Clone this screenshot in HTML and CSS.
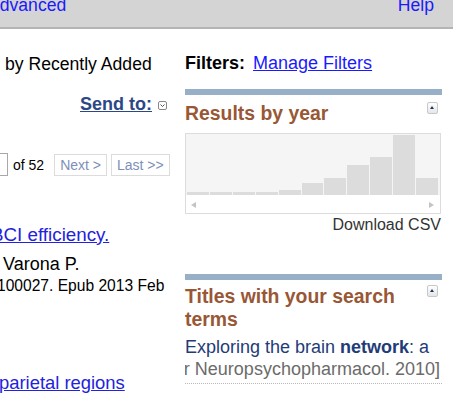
FILE: index.html
```html
<!DOCTYPE html>
<html lang="en">
<head>
  <meta charset="UTF-8">
  <title>PubMed results</title>
  <link rel="stylesheet" href="styles.css">
</head>
<body>

  <div class="topbar">
    <a href="#" class="adv">Advanced</a>
    <a href="#" class="help">Help</a>
  </div>

  <div class="content">
    <!-- left: result list, cut by the window -->
    <div class="results">
      <div class="sortby">by Recently Added</div>
      <div class="sendto">
        <a href="#">Send to:</a>
        <span class="dropicon">
          <svg width="9" height="9" viewBox="0 0 9 9"><rect x="0.5" y="0.5" width="8" height="8" rx="1.5" fill="#fff" stroke="#888"/><path d="M2.5 3.5 L4.5 5.5 L6.5 3.5" fill="none" stroke="#555"/></svg>
        </span>
      </div>
      <div class="pager">
        <input class="pagebox" type="text" value="1">
        <span class="ofpages">of 52</span>
        <a href="#" class="pagebtn">Next &gt;</a>
        <a href="#" class="pagebtn">Last &gt;&gt;</a>
      </div>
      <a href="#" class="title-link first">BCI efficiency.</a>
      <div class="authors">Varona P.</div>
      <div class="cite">100027. Epub 2013 Feb</div>
      <a href="#" class="title-link second">parietal regions</a>
    </div>

    <!-- right: side portlets -->
    <div class="sidebar">
      <div class="filters"><b>Filters:</b> <a href="#">Manage Filters</a></div>

      <div class="portlet">
        <div class="portlet-head">
          <h3>Results by year</h3>
          <span class="toggle"></span>
        </div>
        <div class="chart">
          <div class="plot">
            <div class="bar" style="height: 3px"></div>
            <div class="bar" style="height: 3px"></div>
            <div class="bar" style="height: 3px"></div>
            <div class="bar" style="height: 3px"></div>
            <div class="bar" style="height: 5px"></div>
            <div class="bar" style="height: 12px"></div>
            <div class="bar" style="height: 17px"></div>
            <div class="bar" style="height: 30px"></div>
            <div class="bar" style="height: 38px"></div>
            <div class="bar" style="height: 60px"></div>
            <div class="bar" style="height: 17px"></div>
          </div>
          <div class="scroller">
            <span class="arrow left"></span>
            <span class="arrow right"></span>
          </div>
        </div>
        <div class="csv"><a href="#">Download CSV</a></div>
      </div>

      <div class="portlet titles">
        <div class="portlet-head">
          <h3>Titles with your search terms</h3>
          <span class="toggle"></span>
        </div>
        <div class="item">
          <a href="#" class="item-title">Exploring the brain <b>network</b>: a</a>
          <div class="item-src"><span>[Eur Neuropsychopharmacol. 2010]</span></div>
        </div>
      </div>
    </div>
  </div>

</body>
</html>
```

FILE: styles.css
```css
body {
  margin: 0;
  font-family: "Liberation Sans", Arial, sans-serif;
  font-size: 17.6px;
  line-height: 20px;
  color: #000;
  background: #fff;
  overflow: hidden;
}

a {
  color: #1a1aff;
}

.topbar {
  display: flex;
  justify-content: space-between;
  height: 27px;
  background-color: #d4d4d4;
  border-bottom: 2px solid #b4b4b4;
  padding-right: 19px;
}

.topbar a {
  text-decoration: none;
  margin-top: -5px;
}

.adv {
  margin-left: -12px;
}

.content {
  display: flex;
}

/* left column */
.results {
  width: 180px;
  overflow: hidden;
  flex-shrink: 0;
}

.sortby {
  margin-top: 25px;
  padding-left: 5px;
}

.sendto {
  display: flex;
  justify-content: flex-end;
  align-items: center;
  gap: 6px;
  margin-top: 20px;
  padding-right: 13px;
  height: 20px;
}

.sendto a {
  color: #2c4785;
  font-weight: bold;
  font-size: 18px;
}

.dropicon svg {
  display: block;
  margin-top: 2px;
}

.pager {
  display: flex;
  align-items: center;
  gap: 4px;
  margin-top: 39px;
  height: 23px;
  font-size: 14px;
}

.pagebox {
  width: 30px;
  height: 23px;
  box-sizing: border-box;
  margin: 0 0 0 -22px;
  border: 1px solid #a8a8a8;
  font: inherit;
  padding: 0;
}

.ofpages {
  margin: 0 6px 0 1px;
}

.pagebtn {
  display: block;
  height: 22px;
  line-height: 20px;
  box-sizing: border-box;
  border: 1px solid #dcdcdc;
  padding: 0 5px;
  color: #7d8fb8;
  text-decoration: none;
}

.title-link {
  display: block;
  white-space: nowrap;
  font-size: 18.4px;
  color: #2222dd;
}

.title-link.first {
  margin-top: 49px;
  margin-left: -9px;
  font-size: 18.8px;
}

.authors {
  margin-top: 9px;
  padding-left: 3px;
  font-size: 18px;
}

.cite {
  margin-top: 2px;
  margin-left: -3px;
  font-size: 15.6px;
  white-space: nowrap;
}

.title-link.second {
  margin-top: 77px;
  margin-left: -1px;
}

/* right column */
.sidebar {
  width: 257px;
  margin-left: 5px;
}

.filters {
  margin-top: 24px;
  font-size: 18px;
}

.filters a {
  margin-left: 3px;
}

.portlet {
  margin-top: 16px;
  border-top: 6px solid #97b0c8;
}

.portlet-head {
  display: flex;
  justify-content: space-between;
  align-items: flex-start;
  padding-top: 7px;
}

.portlet-head h3 {
  margin: 0;
  color: #985735;
  font-size: 19.4px;
  line-height: 23px;
}

.toggle {
  position: relative;
  flex-shrink: 0;
  width: 9px;
  height: 10px;
  margin: 0 4px 0 0;
  border: 1px solid #c8c8c8;
  border-radius: 2px;
  background: linear-gradient(#fff, #e6e6e6);
}

.toggle::after {
  content: "";
  position: absolute;
  left: 2px;
  top: 3px;
  border-left: 2.5px solid transparent;
  border-right: 2.5px solid transparent;
  border-bottom: 3px solid #1d3466;
}

.chart {
  margin-top: 8px;
  width: 256px;
  height: 81px;
  box-sizing: border-box;
  border: 1px solid #dcdcdc;
}

.plot {
  display: flex;
  align-items: flex-end;
  gap: 1px;
  height: 61px;
  padding: 0 2px 0 1px;
  background: #f5f5f5;
  border-bottom: 1px solid #fff;
}

.bar {
  flex: 1;
  background: #dcdcdc;
}

.scroller {
  display: flex;
  justify-content: space-between;
  align-items: center;
  height: 17px;
  padding: 0 6px 0 5px;
}

.arrow {
  width: 0;
  height: 0;
  border-top: 3.5px solid transparent;
  border-bottom: 3.5px solid transparent;
}

.arrow.left {
  border-right: 5px solid #c4c4c4;
}

.arrow.right {
  border-left: 5px solid #c4c4c4;
}

.csv {
  text-align: right;
  font-size: 16px;
  line-height: 18px;
  margin-top: 2px;
  padding-right: 1px;
}

.csv a {
  color: #333;
  text-decoration: none;
}

.portlet.titles {
  margin-top: 40px;
  width: 257px;
}

.titles .portlet-head {
  padding-top: 5px;
}

.item {
  margin-top: 6px;
  border-bottom: 1px dotted #b8b8b8;
  padding-bottom: 4px;
  font-size: 18px;
}

.item-title {
  display: block;
  white-space: nowrap;
  color: #1f3c78;
  text-decoration: none;
}

.item-src {
  display: flex;
  justify-content: flex-end;
  overflow: hidden;
  white-space: nowrap;
  margin: 2px 2px 0 0;
  color: #6b6b6b;
}
```
